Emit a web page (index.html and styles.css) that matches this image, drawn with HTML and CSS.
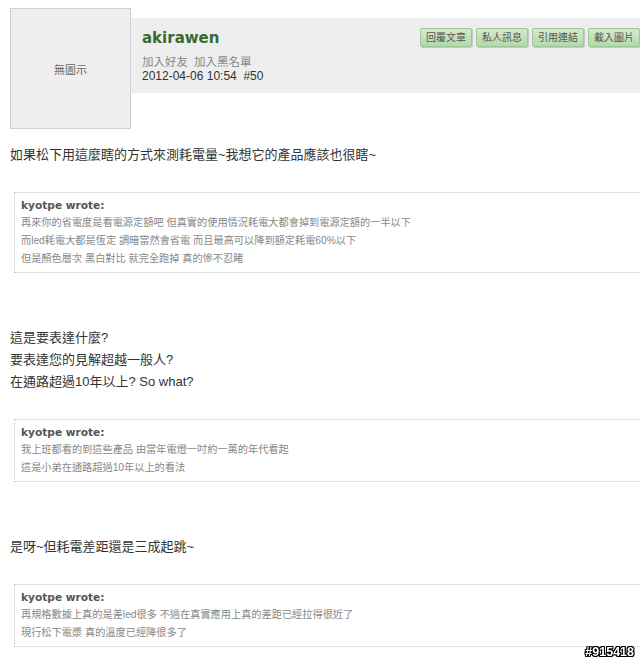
FILE: index.html
```html
<!DOCTYPE html>
<html lang="zh-Hant">
<head>
    <meta charset="UTF-8">
    <meta name="viewport" content="width=device-width, initial-scale=1.0">
    <title>akirawen #50</title>
    <link rel="stylesheet" href="styles.css">
</head>
<body>
    <div class="post">
        <!-- Cabeçalho do post: avatar + faixa cinza -->
        <div class="post-header">
            <div class="avatar">無圖示</div>
            <div class="info-bar">
                <div class="author">
                    <div class="username">akirawen</div>
                    <div class="links">
                        <span>加入好友</span>
                        <span>加入黑名單</span>
                    </div>
                    <div class="date">2012-04-06 10:54&nbsp;&nbsp;#50</div>
                </div>
                <div class="actions">
                    <button class="btn">回覆文章</button>
                    <button class="btn">私人訊息</button>
                    <button class="btn">引用連結</button>
                    <button class="btn">載入圖片</button>
                </div>
            </div>
        </div>

        <!-- Conteúdo do post -->
        <div class="post-body">
            <p class="text">如果松下用這麼瞎的方式來測耗電量~我想它的產品應該也很瞎~</p>

            <div class="quote">
                <div class="quote-title">kyotpe wrote:</div>
                再來你的省電度是看電源定額吧 但真實的使用情況耗電大都會掉到電源定額的一半以下<br>
                而led耗電大都是恆定 調暗當然會省電 而且最高可以降到額定耗電60%以下<br>
                但是顏色層次 黑白對比 就完全跑掉 真的慘不忍睹
            </div>

            <p class="text">這是要表達什麼?<br>要表達您的見解超越一般人?<br>在通路超過10年以上? So what?</p>

            <div class="quote">
                <div class="quote-title">kyotpe wrote:</div>
                我上班都看的到這些產品 由當年電燈一吋約一萬的年代看起<br>
                這是小弟在通路超過10年以上的看法
            </div>

            <p class="text">是呀~但耗電差距還是三成起跳~</p>

            <div class="quote">
                <div class="quote-title">kyotpe wrote:</div>
                再規格數據上真的是差led很多 不過在真實應用上真的差距已經拉得很近了<br>
                現行松下電漿 真的溫度已經降很多了
            </div>
        </div>
    </div>

    <div class="watermark">#915418</div>
</body>
</html>
```

FILE: styles.css
```css
/* Página */
body {
    margin: 0;
    background-color: #fff;
    font-family: "Liberation Sans", "Noto Sans CJK TC", sans-serif;
    color: #333;
    overflow-x: hidden;
}

/* Cabeçalho */
.post-header {
    display: flex;
    align-items: flex-start;
    padding-left: 10px;
}

.avatar {
    width: 119px;
    height: 119px;
    margin-top: 8px;
    border: 1px solid #cfcfcf;
    background-color: #efefef;
    color: #666;
    font-size: 11px;
    display: flex;
    align-items: center;
    justify-content: center;
}

.info-bar {
    flex: 1;
    height: 65px;
    margin-top: 18px;
    padding: 10px 0 0 11px;
    background-color: #eeeeee;
    display: flex;
    justify-content: space-between;
    align-items: flex-start;
}

.username {
    font-family: "DejaVu Sans", sans-serif;
    font-weight: bold;
    font-size: 15px;
    line-height: 20px;
    color: #356b30;
}

.links {
    margin-top: 7px;
    font-size: 11.5px;
    line-height: 14px;
    color: #888;
    display: flex;
    gap: 6px;
}

.date {
    font-size: 12px;
    line-height: 14px;
    color: #333;
}

/* Botões do lado direito */
.actions {
    display: flex;
    gap: 4px;
}

.btn {
    width: 52px;
    height: 19px;
    padding: 0;
    border: 1px solid #9fc697;
    border-radius: 2px;
    background: linear-gradient(#d3ebce, #b3d8ab);
    box-shadow: 1px 1px 1px rgba(0, 0, 0, 0.18);
    color: #555;
    font-family: "Liberation Sans", "Noto Sans CJK TC", sans-serif;
    font-size: 10px;
    line-height: 17px;
}

/* Corpo do post */
.post-body {
    padding: 15px 0 0 10px;
}

.text {
    margin: 0;
    font-size: 13px;
    line-height: 22px;
    color: #333;
}

.quote + .text {
    margin-top: 54px;
}

.quote {
    margin: 26px -30px 0 4px;
    padding: 3px 6px 4px;
    border: 1px dotted #c8c8c8;
    font-size: 10.2px;
    line-height: 18px;
    color: #888;
}

.quote-title {
    font-family: "DejaVu Sans", sans-serif;
    font-weight: bold;
    font-size: 10.6px;
    color: #555;
}

/* Marca no canto inferior */
.watermark {
    position: fixed;
    right: 6px;
    bottom: 1px;
    font-family: "Liberation Sans", sans-serif;
    font-weight: bold;
    font-size: 12.5px;
    line-height: 12px;
    color: #fff;
    text-shadow: 1px 0 0 #000, -1px 0 0 #000, 0 1px 0 #000, 0 -1px 0 #000,
        1px 1px 0 #000, -1px -1px 0 #000, 1px -1px 0 #000, -1px 1px 0 #000;
}
```
